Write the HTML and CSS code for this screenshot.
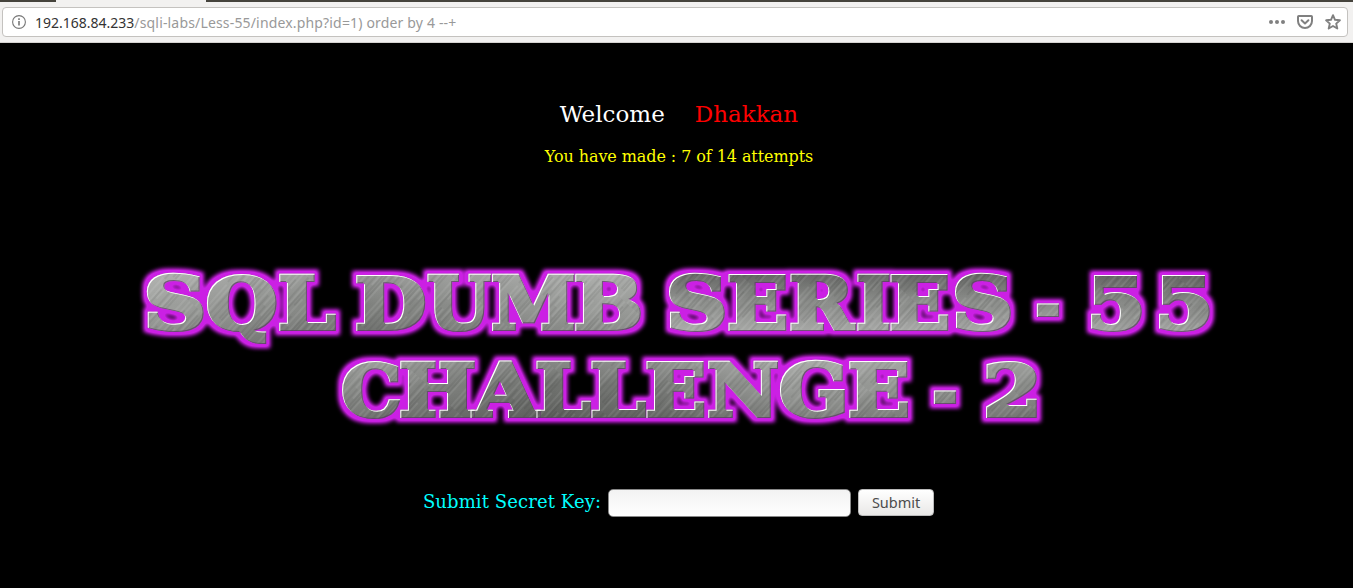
FILE: index.html
```html
<!DOCTYPE html>
<html lang="en">
<head>
<meta charset="utf-8">
<title>Less-55</title>
<link rel="stylesheet" href="styles.css">
</head>
<body>
<header class="chrome">
  <div class="tabs"><span class="tab-left"></span><span class="tab-active"></span><span class="tab-right"></span></div>
  <div class="urlbar">
    <svg class="info" viewBox="0 0 14 14"><circle cx="7" cy="7" r="6.4" fill="none" stroke="#777" stroke-width="1.1"/><path d="M7 6v4.500M7 3.300v1.600" stroke="#777" stroke-width="1.6"/></svg>
    <div class="url"><span class="host">192.168.84.233</span><span class="path">/sqli-labs/Less-55/index.php?id=1) order by 4 --+</span></div>
    <svg class="dots" viewBox="0 0 16 4"><g fill="#808080"><circle cx="2" cy="2" r="2"/><circle cx="8" cy="2" r="2"/><circle cx="14" cy="2" r="2"/></g></svg>
    <svg class="pocket" viewBox="0 0 16 14"><path d="M1.800 1h12.400q.8 0 .8.8V6a7 7 0 0 1-14 0V1.800Q1 1 1.800 1z" fill="none" stroke="#808080" stroke-width="2"/><path d="M4.600 5.200 8 8.400l3.400-3.200" fill="none" stroke="#808080" stroke-width="2" stroke-linecap="round" stroke-linejoin="round"/></svg>
    <svg class="star" viewBox="0 0 16 16"><path d="M8 1.200 10 5.800l4.900.5-3.700 3.300 1.100 4.900L8 12l-4.300 2.500 1.100-4.900L1.100 6.300 6 5.800z" fill="none" stroke="#808080" stroke-width="1.9" stroke-linejoin="round"/></svg>
  </div>
</header>
<main class="page">
  <h1 class="welcome"><span class="hello">Welcome</span><span class="name">Dhakkan</span></h1>
  <p class="attempts">You have made : 7 of 14 attempts</p>
  <svg class="banner" viewBox="130 255 1094 180">
    <defs>
      <linearGradient id="metal1" gradientUnits="userSpaceOnUse" x1="147" y1="0" x2="1210" y2="0">
        <stop offset="0" stop-color="#a0a29f"/><stop offset=".2" stop-color="#7e807d"/><stop offset=".43" stop-color="#9c9e9b"/><stop offset=".55" stop-color="#8c8e8b"/><stop offset=".8" stop-color="#8e908d"/><stop offset="1" stop-color="#858784"/>
      </linearGradient>
      <linearGradient id="metal2" gradientUnits="userSpaceOnUse" x1="343" y1="0" x2="1037" y2="0">
        <stop offset="0" stop-color="#8c8e8b"/><stop offset=".3" stop-color="#6e706d"/><stop offset=".45" stop-color="#787a77"/><stop offset=".65" stop-color="#999b98"/><stop offset="1" stop-color="#8a8c89"/>
      </linearGradient>
      <linearGradient id="fade-down" x1="0" y1="0" x2="0" y2="1">
        <stop offset="0" stop-color="#fff" stop-opacity=".2"/><stop offset=".45" stop-color="#fff" stop-opacity="0"/><stop offset=".5" stop-color="#000" stop-opacity="0"/><stop offset="1" stop-color="#000" stop-opacity=".18"/>
      </linearGradient>
      <linearGradient id="fade-up" x1="0" y1="0" x2="0" y2="1">
        <stop offset="0" stop-color="#000" stop-opacity=".3"/><stop offset=".5" stop-color="#000" stop-opacity="0"/><stop offset=".55" stop-color="#fff" stop-opacity="0"/><stop offset="1" stop-color="#fff" stop-opacity=".25"/>
      </linearGradient>
      <pattern id="brush" width="31" height="97" patternUnits="userSpaceOnUse" patternTransform="rotate(42)">
        <path d="M2 0v60M9 30v67M15 0v40M22 20v77M28 0v50M6 0v20M18 60v37" stroke="#fff" stroke-width=".7" stroke-opacity=".22"/>
        <path d="M4 10v80M12 0v50M17 5v52M25 40v57M30 50v47M20 0v30M7 30v60" stroke="#000" stroke-width=".7" stroke-opacity=".18"/>
      </pattern>
      <filter id="glow" filterUnits="userSpaceOnUse" x="130" y="250" width="1100" height="190" color-interpolation-filters="sRGB">
        <feMorphology in="SourceAlpha" operator="dilate" radius="4" result="fat"/>
        <feGaussianBlur in="fat" stdDeviation="2.3" result="blur"/>
        <feComponentTransfer in="blur" result="soft"><feFuncA type="linear" slope="1.3"/></feComponentTransfer>
        <feFlood flood-color="#cb20e4"/><feComposite in2="soft" operator="in"/>
      </filter>
      <filter id="rim" x="-10%" y="-10%" width="120%" height="120%" color-interpolation-filters="sRGB">
        <feOffset in="SourceAlpha" dx=".9" dy=".9" result="dr"/>
        <feFlood flood-color="#fff"/><feComposite in2="SourceAlpha" operator="in"/><feComposite in2="dr" operator="out" result="light"/>
        <feOffset in="SourceAlpha" dx="-1" dy="-1" result="ul"/>
        <feFlood flood-color="#5d3a66" flood-opacity=".75"/><feComposite in2="SourceAlpha" operator="in"/><feComposite in2="ul" operator="out" result="dark"/>
        <feMerge><feMergeNode in="dark"/><feMergeNode in="light"/></feMerge>
      </filter>
      <mask id="letter-mask" maskUnits="userSpaceOnUse" x="130" y="250" width="1100" height="190"></mask>
    </defs>
    <g class="glow"><g class="lettering">
      <text y="331" data-fit="146-204 207-277 279-337 - 356-426 427-492 492-575 575-641 - 668-725 728-787 790-857 857-890 890-949 954-1011 - 1036-1059 - 1090-1142 1158-1210">SQL DUMB SERIES - 55</text>
      <text y="418" data-fit="342-400 400-475 470-541 536-592 591-647 646-705 708-778 780-845 849-909 - 933-956 - 985-1037">CHALLENGE - 2</text>
    </g></g>
    <g mask="url(#letter-mask)">
      <rect x="140" y="265" width="1080" height="84" fill="url(#metal1)"/>
      <rect x="140" y="272" width="515" height="74" fill="url(#fade-down)"/>
      <rect x="655" y="272" width="565" height="62" fill="url(#fade-up)"/>
      <rect x="330" y="350" width="720" height="75" fill="url(#metal2)"/>
      <rect x="330" y="357" width="720" height="64" fill="url(#fade-down)"/>
      <rect x="130" y="255" width="1094" height="180" fill="url(#brush)"/>
    </g>
    <g class="rims" aria-hidden="true"></g>
  </svg>
  <form class="key-form">
    <label class="key-label" for="key">Submit Secret Key:</label>
    <input class="key-input" id="key" type="text">
    <button class="key-submit" type="button">Submit</button>
  </form>
</main>
<script src="banner.js"></script>
</body>
</html>
```
FILE: banner.js
```js
// Fits each banner letter between the left and right edges listed in data-fit.
const STROKE = 4;
const pen = document.createElement('canvas').getContext('2d');
pen.font = 'bold 72px "DejaVu Serif"';
const NS = 'http://www.w3.org/2000/svg';
document.querySelectorAll('.lettering text').forEach(row => {
  const spans = row.dataset.fit.split(' ');
  const y = Number(row.getAttribute('y'));
  const group = document.createElementNS(NS, 'g');
  [...row.textContent].forEach((ch, i) => {
    if (ch === ' ') return;
    const [left, right] = spans[i].split('-').map(Number);
    const m = pen.measureText(ch);
    const scale = (right - left) / (m.actualBoundingBoxRight + m.actualBoundingBoxLeft + STROKE);
    const x = left + (m.actualBoundingBoxLeft + STROKE / 2) * scale;
    const t = document.createElementNS(NS, 'text');
    t.setAttribute('transform', `translate(${x} ${y - STROKE / 2}) scale(${scale} 1)`);
    t.textContent = ch;
    group.append(t);
  });
  row.replaceWith(group);
});
// The brushed metal shows only through the letters; the rims give each letter its bevel.
const lettering = document.querySelector('.lettering');
document.getElementById('letter-mask').append(lettering.cloneNode(true));
document.querySelector('.rims').append(lettering.cloneNode(true));
```
FILE: styles.css
```css
body { margin: 0; background: #000; overflow: hidden; }
.chrome { height: 43px; box-sizing: border-box; background: #f2f1f0; border-bottom: 1px solid #d5d3d0; }
.tabs { display: flex; height: 2px; }
.tab-left { width: 56px; background: #45433c; }
.tab-active { width: 150px; }
.tab-right { flex: 1; background: #45433c; }
.urlbar { display: flex; align-items: center; box-sizing: border-box; height: 30px; margin: 5px 5px 0 2px; padding: 0 6px 0 9px; background: #fff; border: 1px solid #c4c2bf; border-radius: 4px; }
.info { width: 14px; height: 14px; }
.url { flex: 1; margin-left: 9px; padding-top: 2px; font: 14px/28px "Noto Sans", sans-serif; white-space: pre; }
.host { color: #333; }
.path { color: #999; letter-spacing: .165px; }
.dots { width: 16px; height: 4px; }
.pocket { width: 16px; height: 14px; margin-left: 12px; }
.star { width: 16px; height: 16px; margin-left: 12px; }
.page { display: flex; flex-direction: column; align-items: center; font-family: "DejaVu Serif", serif; }
.welcome { display: flex; gap: 30px; margin: 56px 0 0 5px; font-size: 23px; line-height: 30px; font-weight: 400; }
.hello { color: #fff; }
.name { color: #f00; }
.attempts { margin: 18px 0 0 5px; color: #ff0; font-size: 16px; line-height: 20px; letter-spacing: -.08px; }
.banner { width: 1094px; height: 180px; margin-top: 88px; }
.glow { filter: url(#glow); }
.lettering { font: bold 72px "DejaVu Serif", serif; fill: #999; stroke: #999; stroke-width: 4; stroke-linejoin: miter; stroke-miterlimit: 2; }
#letter-mask .lettering { fill: #fff; stroke: #fff; }
.rims text { filter: url(#rim); }
.key-form { display: flex; align-items: center; margin: 54px 0 0 4px; }
.key-label { color: #0ff; font-size: 18px; line-height: 24px; margin-top: -3px; letter-spacing: .1px; }
.key-input { box-sizing: border-box; width: 243px; height: 28px; margin: 0 0 0 7px; border: 1px solid #888; border-radius: 5px; background: linear-gradient(#f2f2f2, #fff); }
.key-submit { box-sizing: border-box; width: 76px; height: 27px; margin: -1px 0 0 7px; padding: 0 0 1px; border: 1px solid #bbb; border-radius: 4px; background: linear-gradient(#fff, #e9e8e7); color: #4c4c4c; font: 14.5px "Noto Sans", sans-serif; }
```
